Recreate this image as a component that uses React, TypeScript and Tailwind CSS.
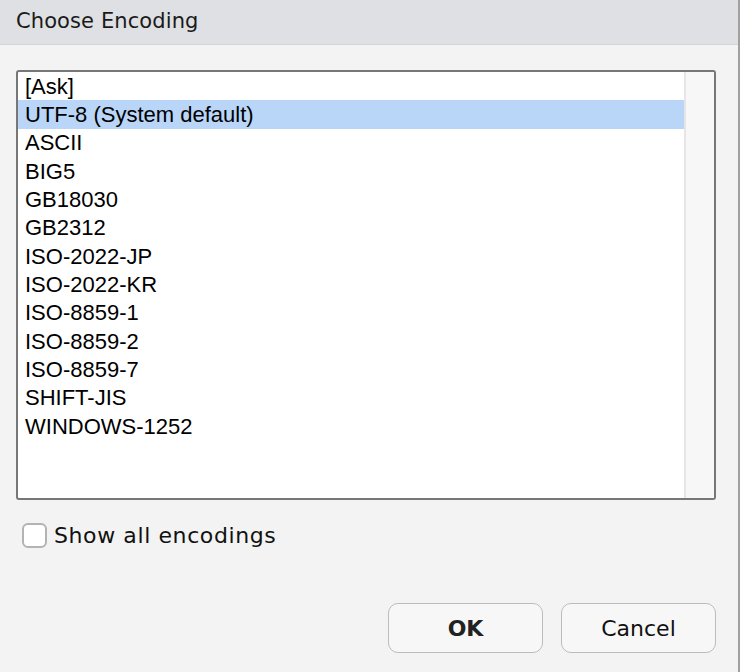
import React from "react";

const items = [
  "[Ask]",
  "UTF-8 (System default)",
  "ASCII",
  "BIG5",
  "GB18030",
  "GB2312",
  "ISO-2022-JP",
  "ISO-2022-KR",
  "ISO-8859-1",
  "ISO-8859-2",
  "ISO-8859-7",
  "SHIFT-JIS",
  "WINDOWS-1252",
];

export default function App() {
  return (
    <div className="w-[740px] h-[672px] flex bg-[#f2f3f2] overflow-hidden">
      <div className="flex-1 flex flex-col">
        <div className="h-[45px] bg-[#dfe0e3] border-b border-[#d3d4d6] flex items-center pl-[16px]">
          <span className="text-[21px] text-[#1a1a1a] tracking-[0.1px]" style={{ fontFamily: '"DejaVu Sans", sans-serif' }}>
            Choose Encoding
          </span>
        </div>
        <div className="flex-1 flex flex-col pl-[16px] pr-[22px] pt-[25px]">
          <div className="h-[430px] border-2 border-[#777777] rounded-[3px] bg-white flex overflow-hidden">
            <div className="flex-1 flex flex-col" style={{ fontFamily: '"Liberation Sans", Arial, sans-serif' }}>
              {items.map((it, i) => (
                <div
                  key={it}
                  className={
                    i === 1
                      ? "h-[28.333px] flex items-center pl-[7px] text-[22px] text-black bg-[#b9d6f9]"
                      : "h-[28.333px] flex items-center pl-[7px] text-[22px] text-black"
                  }
                >
                  {it}
                </div>
              ))}
            </div>
            <div className="w-[30px] bg-[#f7f7f7] border-l-2 border-[#e6e6e6]" />
          </div>
          <div className="flex items-center mt-[19px] pl-[6px] gap-[7px]">
            <div className="w-[25px] h-[25px] rounded-[6px] border-2 border-[#b3b3b3] bg-white" />
            <span className="text-[22px] text-[#111] tracking-[0.6px]" style={{ fontFamily: '"DejaVu Sans", sans-serif' }}>
              Show all encodings
            </span>
          </div>
          <div className="flex justify-end gap-[18px] mt-[51px]">
            <button
              className="w-[155px] h-[50px] rounded-[10px] border-[1.5px] border-[#bcbcbc] bg-[#f7f7f7] text-[22px] font-bold text-[#222]"
              style={{ fontFamily: '"DejaVu Sans", sans-serif' }}
            >
              OK
            </button>
            <button
              className="w-[155px] h-[50px] rounded-[10px] border-[1.5px] border-[#bcbcbc] bg-[#f7f7f7] text-[22px] text-[#111]"
              style={{ fontFamily: '"DejaVu Sans", sans-serif' }}
            >
              Cancel
            </button>
          </div>
        </div>
      </div>
      <div className="w-[2px] bg-[#a0a0a0]" />
    </div>
  );
}
